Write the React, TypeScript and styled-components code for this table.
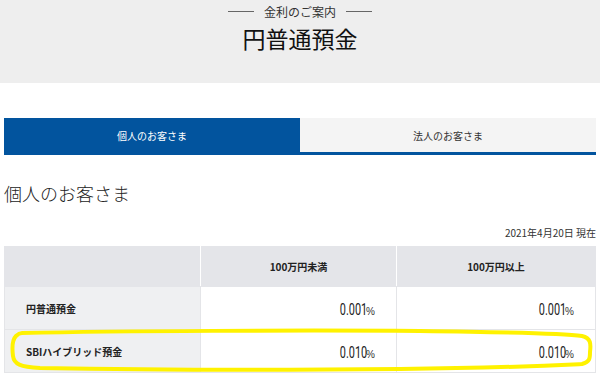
import React from "react";
import styled, { createGlobalStyle } from "styled-components";

const GlobalStyle = createGlobalStyle`
  html, body {
    margin: 0;
    padding: 0;
    background: #fff;
  }
  body {
    font-family: "Noto Sans CJK JP", "Noto Sans", sans-serif;
    color: #222;
  }
`;

interface Rate {
  label: string;
  under: string;
  over: string;
}

const rates: Rate[] = [
  { label: "円普通預金", under: "0.001", over: "0.001" },
  { label: "SBIハイブリッド預金", under: "0.010", over: "0.010" },
];

const App = () => {
  return (
    <>
      <GlobalStyle />
      <Band>
        <SubTitle>金利のご案内</SubTitle>
        <Title>円普通預金</Title>
      </Band>
      <Main>
        <Tabs>
          <Tab active>個人のお客さま</Tab>
          <Tab>法人のお客さま</Tab>
        </Tabs>
        <Heading>個人のお客さま</Heading>
        <DateLine>2021年4月20日 現在</DateLine>
        <TableWrap>
          <Table>
            <colgroup>
              <col style={{ width: 196 }} />
              <col style={{ width: 196 }} />
              <col />
            </colgroup>
            <thead>
              <tr>
                <HeadCell />
                <HeadCell>100万円未満</HeadCell>
                <HeadCell>100万円以上</HeadCell>
              </tr>
            </thead>
            <tbody>
              {rates.map((r) => (
                <tr key={r.label}>
                  <LabelCell>{r.label}</LabelCell>
                  <RateCell>
                    <Num>{r.under}</Num>
                    <Unit>%</Unit>
                  </RateCell>
                  <RateCell>
                    <Num>{r.over}</Num>
                    <Unit>%</Unit>
                  </RateCell>
                </tr>
              ))}
            </tbody>
          </Table>
          {/* hand-drawn highlight around the hybrid row */}
          <Marker viewBox="-4 0 600 130" preserveAspectRatio="none">
            <path
              d="M18 87 C116 85 296 84 416 85 C496 86 556 87 578 90 C587 92 587 98 586 106 C586 112 586 116 578 118 C536 120 496 122 396 123 C296 124 146 124 36 122 C16 121 10 118 9 110 C8 102 8 94 12 90 C14 88 16 87 18 87 Z"
              fill="none"
              stroke="#fff200"
              strokeWidth="4"
            />
          </Marker>
        </TableWrap>
      </Main>
    </>
  );
};
export default App;

const Band = styled.div`
  height: 83px;
  background: #eeeeee;
  display: flex;
  flex-direction: column;
  align-items: center;
  padding-top: 3px;
  box-sizing: border-box;
`;
const SubTitle = styled.div`
  display: flex;
  align-items: center;
  gap: 10px;
  font-size: 12px;
  line-height: 17px;
  color: #333;
  &::before,
  &::after {
    content: "";
    display: block;
    width: 26px;
    height: 1px;
    background: #666;
  }
`;
const Title = styled.h1`
  margin: 3px 0 0;
  font-size: 23px;
  line-height: 30px;
  font-weight: 400;
  color: #111;
`;
const Main = styled.div`
  padding: 0 4px;
`;
const Tabs = styled.div`
  margin-top: 35px;
  display: flex;
  border-bottom: 3px solid #02549e;
`;
const Tab = styled.div<{ active?: boolean }>`
  flex: 1;
  height: 34px;
  display: flex;
  align-items: center;
  justify-content: center;
  font-size: 10px;
  background: ${(p) => (p.active ? "#02549e" : "#f4f4f4")};
  color: ${(p) => (p.active ? "#fff" : "#333")};
`;
const Heading = styled.h2`
  margin: 26px 0 0;
  font-size: 18px;
  line-height: 24px;
  font-weight: 300;
  color: #222;
`;
const DateLine = styled.div`
  margin-top: 21px;
  text-align: right;
  font-size: 10px;
  line-height: 14px;
  color: #333;
`;
const TableWrap = styled.div`
  position: relative;
  margin-top: 6px;
`;
const Table = styled.table`
  width: 100%;
  border-collapse: collapse;
  table-layout: fixed;
`;
const HeadCell = styled.th`
  height: 39px;
  padding: 0;
  background: #e4e5e9;
  border: 1px solid #e4e5e9;
  border-left-color: #fff;
  border-right-color: #fff;
  font-size: 10px;
  font-weight: 700;
  color: #222;
  text-align: center;
  &:first-child {
    border-left-color: #e4e5e9;
  }
  &:last-child {
    border-right-color: #e4e5e9;
  }
`;
const LabelCell = styled.th`
  height: 42px;
  padding: 0 0 0 21px;
  background: #eff0f2;
  border: 1px solid #e4e5e8;
  font-size: 10px;
  font-weight: 700;
  text-align: left;
  color: #222;
`;
const RateCell = styled.td`
  height: 42px;
  padding: 0 21px 0 0;
  border: 1px solid #e4e5e8;
  text-align: right;
  white-space: nowrap;
`;
const Num = styled.span`
  display: inline-block;
  font-family: Roboto, "Liberation Sans", sans-serif;
  font-weight: 400;
  font-size: 16px;
  color: #222;
  transform: scaleX(0.68);
  transform-origin: right center;
  margin-right: -1px;
`;
const Unit = styled.span`
  font-family: "Liberation Sans", sans-serif;
  font-size: 10px;
  color: #333;
`;
const Marker = styled.svg`
  position: absolute;
  left: -4px;
  top: 0;
  width: 600px;
  height: 130px;
  overflow: visible;
  pointer-events: none;
`;
